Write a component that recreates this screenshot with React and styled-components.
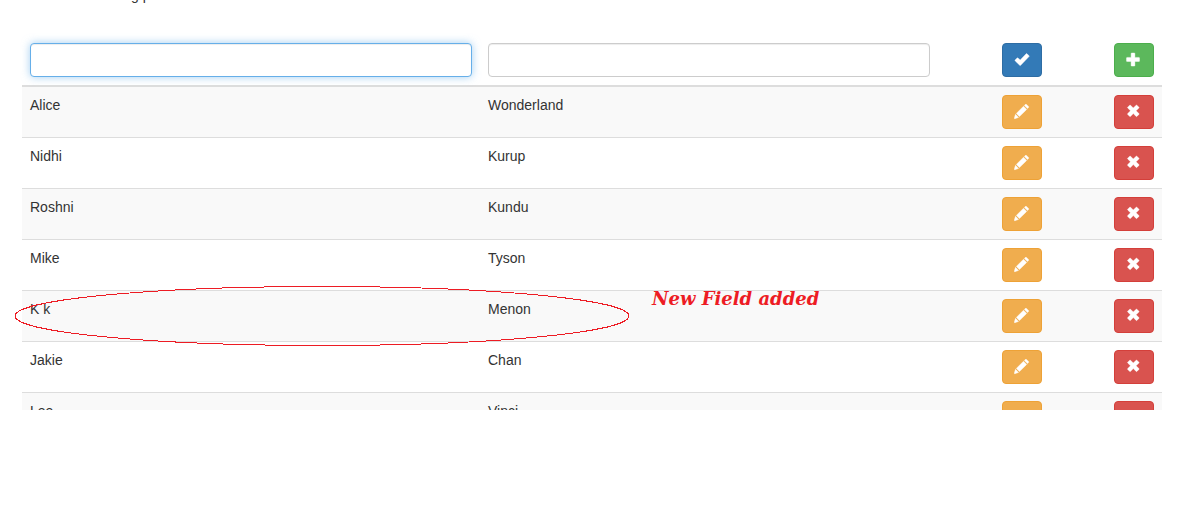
import React from "react";
import styled, { createGlobalStyle } from "styled-components";

const GlobalStyle = createGlobalStyle`
  * { box-sizing: border-box; }
  body {
    margin: 0;
    background: #fff;
    color: #333;
    font: 14px/20px "Helvetica Neue", Helvetica, "Liberation Sans", Arial, sans-serif;
  }
`;

const Page = styled.main`
  position: relative;
  padding: 0 16px 0 22px;
  height: 410px;
  overflow: hidden;
`;

const Intro = styled.p`
  display: flex;
  align-items: flex-end;
  height: 5px;
  margin: 0 0 30px;
  padding-left: 109px;
  overflow: hidden;
`;

const Table = styled.table`
  width: 100%;
  table-layout: fixed;
  border-collapse: separate;
  border-spacing: 0;
`;

const HeadCell = styled.th`
  width: ${(p) => p.$width || "auto"};
  padding: 8px;
  border-bottom: 2px solid #ddd;
  font-weight: 400;
  text-align: ${(p) => p.$align || "left"};
  vertical-align: bottom;
`;

const Row = styled.tr`
  &:nth-child(odd) { background: #f9f9f9; }
  &:not(:first-child) > td { border-top: 1px solid #ddd; }
`;

const Cell = styled.td`
  padding: 8px;
  text-align: ${(p) => p.$align || "left"};
  vertical-align: top;
`;

const Input = styled.input`
  display: block;
  width: 100%;
  height: 34px;
  padding: 6px 12px;
  border: 1px solid #ccc;
  border-radius: 4px;
  background: #fff;
  color: #555;
  font: inherit;
  box-shadow: inset 0 1px 1px rgba(0, 0, 0, 0.075);
  outline: 0;

  ${(p) => p.$active && `
    border-color: #66afe9;
    box-shadow: inset 0 1px 1px rgba(0, 0, 0, 0.075), 0 0 8px rgba(102, 175, 233, 0.6);
  `}
`;

const tones = {
  primary: ["#337ab7", "#2e6da4"],
  success: ["#5cb85c", "#4cae4c"],
  warning: ["#f0ad4e", "#eea236"],
  danger: ["#d9534f", "#d43f3a"],
};

const Button = styled.button`
  display: inline-flex;
  align-items: center;
  justify-content: center;
  width: 40px;
  height: 34px;
  padding: 0;
  border: 1px solid ${(p) => tones[p.$tone][1]};
  border-radius: 4px;
  background: ${(p) => tones[p.$tone][0]};
  color: #fff;
  vertical-align: top;
  cursor: pointer;
`;

const Glyph = styled.svg`
  display: block;
  width: 16px;
  height: 16px;
  fill: currentColor;
  stroke: currentColor;
  stroke-width: 0.4;
  stroke-linejoin: round;
`;

const shapes = {
  check: "M12.2 1.8q.4-.4.8 0l2 2q.4.4 0 .8L6.7 13.3q-.5.5-1 0L1.1 8.8q-.4-.4 0-.8l2-2q.4-.4.8 0l2.3 1.9Z",
  plus: "M5.7 1h2.6q.6 0 .6.6v3.8h4q.6 0 .6.6v2.9q0 .6-.6.6h-4v4q0 .6-.6.6H5.7q-.6 0-.6-.6v-4h-4q-.6 0-.6-.6V6q0-.6.6-.6h4V1.600q0-.6.6-.6Z",
  pencil: "M11.3.4q.6-.6 1.200 0l2 2q.6.6 0 1.200l-1 1-3.200-3.200ZM9.500 2.200l3.200 3.200-7.200 7.200-3.200-3.200ZM1.500 10.300l3.100 3.100-3.500 1.300q-1.100.3-.8-.8Z",
  remove: "M3.7 1.200q.4-.4.8 0L7.300 4l2.800-2.800q.4-.4.8 0l2 2q.4.4 0 .8L10.100 6.800l2.800 2.800q.4.4 0 .8l-2 2q-.4.4-.8 0L7.300 9.600l-2.800 2.800q-.4.4-.8 0l-2-2q-.4-.4 0-.8l2.800-2.800L1.700 4q-.4-.4 0-.8Z",
};

const Annotation = styled.div`
  position: absolute;
  left: 14px;
  top: 286px;
  display: flex;
  align-items: flex-start;
  gap: 22px;
  pointer-events: none;
`;

const Ring = styled.svg`
  display: block;
  width: 616px;
  height: 60px;
  fill: none;
  stroke: #ed1c24;
`;

const Note = styled.span`
  margin-top: 3px;
  color: #ed1c24;
  font: italic bold 18px/20px "Lucida Calligraphy", "Monotype Corsiva", "DejaVu Serif", serif;
  white-space: nowrap;
`;

function Action({ tone, icon, label }) {
  return (
    <Button type="button" $tone={tone} aria-label={label}>
      <Glyph viewBox="0 0 16 16" aria-hidden="true">
        <path d={shapes[icon]} />
      </Glyph>
    </Button>
  );
}

const people = [
  ["Alice", "Wonderland"],
  ["Nidhi", "Kurup"],
  ["Roshni", "Kundu"],
  ["Mike", "Tyson"],
  ["K k", "Menon"],
  ["Jakie", "Chan"],
  ["Lee", "Vinci"],
];

export default function App() {
  return (
    <>
      <GlobalStyle />
      <Page>
        <Intro>g p</Intro>
        <Table>
          <thead>
            <tr>
              <HeadCell><Input $active type="text" aria-label="First name" /></HeadCell>
              <HeadCell><Input type="text" aria-label="Last name" /></HeadCell>
              <HeadCell $width="112px" $align="right"><Action tone="primary" icon="check" label="Save" /></HeadCell>
              <HeadCell $width="112px" $align="right"><Action tone="success" icon="plus" label="Add" /></HeadCell>
            </tr>
          </thead>
          <tbody>
            {people.map(([first, last]) => (
              <Row key={first}>
                <Cell>{first}</Cell>
                <Cell>{last}</Cell>
                <Cell $align="right"><Action tone="warning" icon="pencil" label={`Edit ${first}`} /></Cell>
                <Cell $align="right"><Action tone="danger" icon="remove" label={`Delete ${first}`} /></Cell>
              </Row>
            ))}
          </tbody>
        </Table>
        <Annotation>
          <Ring viewBox="0 0 616 60" aria-hidden="true">
            <ellipse cx="308" cy="30" rx="307" ry="29.5" shapeRendering="crispEdges" />
          </Ring>
          <Note>New Field added</Note>
        </Annotation>
      </Page>
    </>
  );
}
